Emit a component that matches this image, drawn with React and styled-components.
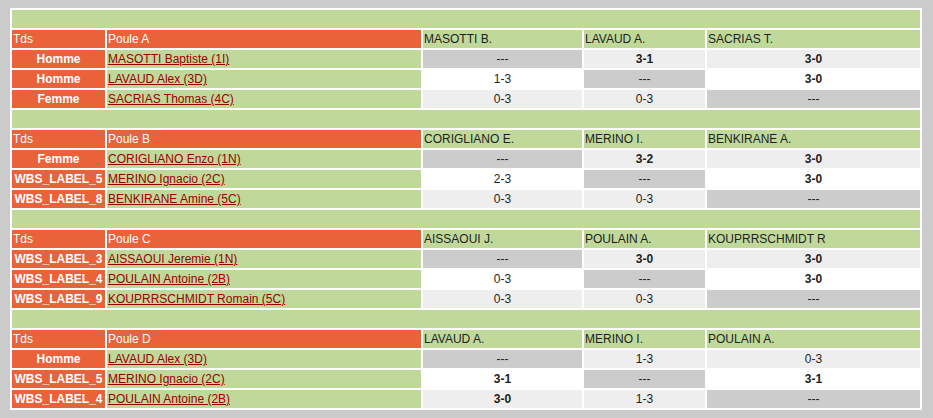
import React from 'react';
import styled, { createGlobalStyle } from 'styled-components';

const GlobalStyle = createGlobalStyle`
  body {
    margin: 0;
    background: #cbcbcb;
    font-family: "Liberation Sans", Arial, sans-serif;
    font-size: 12px;
  }
`;

const COLORS = {
  orange: '#e9623a',
  green: '#c0d99b',
  grey: '#cccccc',
  light: '#eeeeee',
  link: '#990000'
};

const poules = [
  {
    name: 'Poule A',
    players: [
      { tds: 'Homme', name: 'MASOTTI Baptiste (1I)', short: 'MASOTTI B.' },
      { tds: 'Homme', name: 'LAVAUD Alex (3D)', short: 'LAVAUD A.' },
      { tds: 'Femme', name: 'SACRIAS Thomas (4C)', short: 'SACRIAS T.' }
    ],
    scores: [
      [null, '3-1', '3-0'],
      ['1-3', null, '3-0'],
      ['0-3', '0-3', null]
    ]
  },
  {
    name: 'Poule B',
    players: [
      { tds: 'Femme', name: 'CORIGLIANO Enzo (1N)', short: 'CORIGLIANO E.' },
      { tds: 'WBS_LABEL_5', name: 'MERINO Ignacio (2C)', short: 'MERINO I.' },
      { tds: 'WBS_LABEL_8', name: 'BENKIRANE Amine (5C)', short: 'BENKIRANE A.' }
    ],
    scores: [
      [null, '3-2', '3-0'],
      ['2-3', null, '3-0'],
      ['0-3', '0-3', null]
    ]
  },
  {
    name: 'Poule C',
    players: [
      { tds: 'WBS_LABEL_3', name: 'AISSAOUI Jeremie (1N)', short: 'AISSAOUI J.' },
      { tds: 'WBS_LABEL_4', name: 'POULAIN Antoine (2B)', short: 'POULAIN A.' },
      { tds: 'WBS_LABEL_9', name: 'KOUPRRSCHMIDT Romain (5C)', short: 'KOUPRRSCHMIDT R' }
    ],
    scores: [
      [null, '3-0', '3-0'],
      ['0-3', null, '3-0'],
      ['0-3', '0-3', null]
    ]
  },
  {
    name: 'Poule D',
    players: [
      { tds: 'Homme', name: 'LAVAUD Alex (3D)', short: 'LAVAUD A.' },
      { tds: 'WBS_LABEL_5', name: 'MERINO Ignacio (2C)', short: 'MERINO I.' },
      { tds: 'WBS_LABEL_4', name: 'POULAIN Antoine (2B)', short: 'POULAIN A.' }
    ],
    scores: [
      [null, '1-3', '0-3'],
      ['3-1', null, '3-1'],
      ['3-0', '1-3', null]
    ]
  }
];

const isWin = (score) => {
  const [a, b] = score.split('-').map(Number);
  return a > b;
};

class App extends React.Component {
  render = () => {
    return (
      <Page>
        <GlobalStyle />
        <Table>
          <colgroup>
            <col style={{ width: 93 }} />
            <col style={{ width: 314 }} />
            <col style={{ width: 159 }} />
            <col style={{ width: 121 }} />
            <col style={{ width: 213 }} />
          </colgroup>
          <tbody>
            {poules.map((poule) => (
              <React.Fragment key={poule.name}>
                <tr>
                  <Spacer colSpan={5} />
                </tr>
                <tr>
                  <HeadCell>Tds</HeadCell>
                  <HeadCell>{poule.name}</HeadCell>
                  {poule.players.map((p) => (
                    <PlayerHead key={p.short}>{p.short}</PlayerHead>
                  ))}
                </tr>
                {poule.players.map((p, i) => (
                  <tr key={p.name}>
                    <TdsCell>{p.tds}</TdsCell>
                    <NameCell>
                      <PlayerLink href="#">{p.name}</PlayerLink>
                    </NameCell>
                    {poule.scores[i].map((s, j) =>
                      s === null ? (
                        <ScoreCell key={j} $self>---</ScoreCell>
                      ) : (
                        <ScoreCell key={j} $odd={i % 2 === 1} $win={isWin(s)}>
                          {s}
                        </ScoreCell>
                      )
                    )}
                  </tr>
                ))}
              </React.Fragment>
            ))}
          </tbody>
        </Table>
      </Page>
    );
  };
}

const Page = styled.div`
  padding: 8px 0 0 10px;
`;

const Table = styled.table`
  width: 912px;
  table-layout: fixed;
  border-collapse: separate;
  border-spacing: 2px;
  background: #ffffff;

  td {
    height: 18px;
    padding: 0 1px;
    line-height: 18px;
    white-space: nowrap;
    overflow: hidden;
    box-sizing: border-box;
  }
`;

const Spacer = styled.td`
  background: ${COLORS.green};
`;

const HeadCell = styled.td`
  background: ${COLORS.orange};
  color: #ffffff;
`;

const PlayerHead = styled.td`
  background: ${COLORS.green};
  color: #1e1e1e;
`;

const TdsCell = styled.td`
  background: ${COLORS.orange};
  color: #ffffff;
  font-weight: bold;
  text-align: center;
`;

const NameCell = styled.td`
  background: ${COLORS.green};
`;

const PlayerLink = styled.a`
  color: ${COLORS.link};
  text-decoration: underline;
`;

const ScoreCell = styled.td`
  text-align: center;
  color: #1e1e1e;
  font-weight: ${({ $win }) => ($win ? 'bold' : 'normal')};
  background: ${({ $self, $odd }) =>
    $self ? COLORS.grey : $odd ? '#ffffff' : COLORS.light};
`;

export default App;
